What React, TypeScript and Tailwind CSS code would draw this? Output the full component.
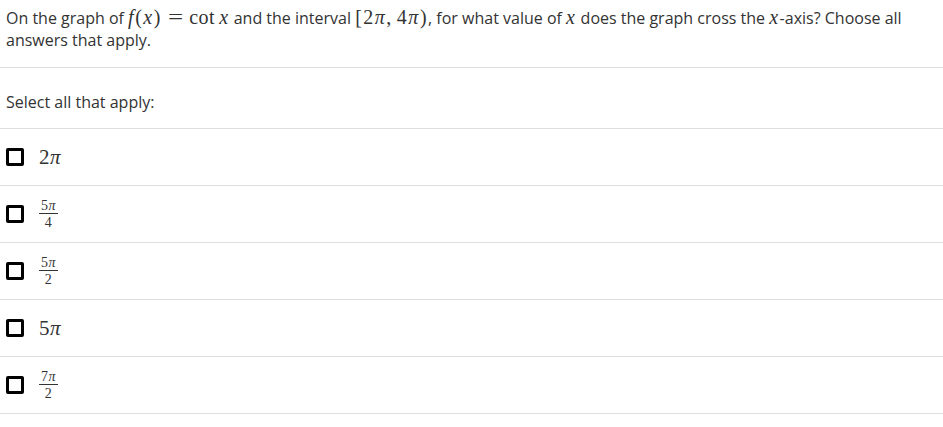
import React from "react";

const M = "font-['Liberation_Serif','DejaVu_Serif',serif]";

function I({ children }: { children: React.ReactNode }) {
  return <span className="italic">{children}</span>;
}

function Frac({ n, d }: { n: React.ReactNode; d: React.ReactNode }) {
  return (
    <span className={`${M} inline-flex flex-col items-center text-[14px] leading-[13px] text-[#333] tracking-[0.5px]`}>
      <span className="px-[2px] pb-[1px]">{n}</span>
      <span className="self-stretch border-t border-[#333]" />
      <span className="px-[2px] pt-[2px]">{d}</span>
    </span>
  );
}

function Box() {
  return <span className="w-[18px] h-[18px] border-[3px] border-black rounded-[2px] shrink-0" />;
}

function Row({ children }: { children: React.ReactNode }) {
  return (
    <div className="h-[57px] border-b border-[#dedede] flex items-center pl-[6px]">
      <Box />
      <div className="ml-[15px] flex items-center">{children}</div>
    </div>
  );
}

const MS = `${M} text-[20px] leading-[0] tracking-[1.5px]`;

export default function App() {
  return (
    <div className="w-[943px] h-[427px] bg-white font-['Open_Sans',sans-serif] text-[#333] text-[16px]">
      <div className="px-[6px] pt-[7px] pb-[16px] leading-[22px] border-b border-[#dedede]">
        On the graph of{" "}
        <span className={MS}>
          <I>f</I>(<I>x</I>)
          <span className="inline-block mx-[8px] scale-x-[1.35] tracking-normal">=</span>
          <span className="tracking-[0.5px]">cot</span>
          <span className="ml-[4px]"><I>x</I></span>
        </span>{" "}
        and the interval{" "}
        <span className={MS}>
          [2<I>π</I>,<span className="ml-[4px]">4</span><I>π</I>)
        </span>
        , for what value of <span className={MS}><I>x</I></span> does the graph cross the{" "}
        <span className={MS}><I>x</I></span>-axis? Choose all answers that apply.
      </div>
      <div className="h-[61px] border-b border-[#dedede] flex items-center px-[6px] pt-[8px] leading-[22px]">
        Select all that apply:
      </div>
      <Row>
        <span className={`${M} text-[21px] leading-none tracking-[0.5px]`}>2<I>π</I></span>
      </Row>
      <Row>
        <Frac n={<>5<I>π</I></>} d="4" />
      </Row>
      <Row>
        <Frac n={<>5<I>π</I></>} d="2" />
      </Row>
      <Row>
        <span className={`${M} text-[21px] leading-none tracking-[0.5px]`}>5<I>π</I></span>
      </Row>
      <Row>
        <Frac n={<>7<I>π</I></>} d="2" />
      </Row>
    </div>
  );
}
